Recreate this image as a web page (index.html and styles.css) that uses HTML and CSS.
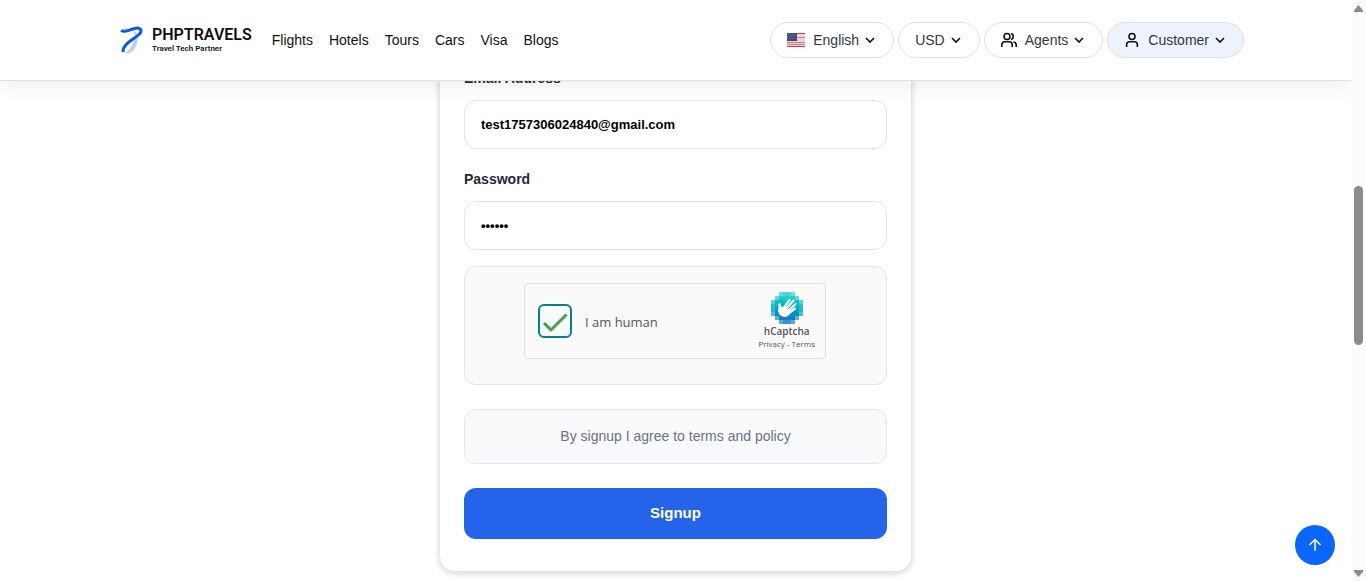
FILE: index.html
```html
<!DOCTYPE html>
<html lang="en">
<head>
<meta charset="utf-8">
<meta name="viewport" content="width=device-width, initial-scale=1">
<title>Signup - PHPTRAVELS</title>
<link rel="stylesheet" href="styles.css">
</head>
<body>
<div class="page">
  <header class="header">
    <a class="brand" href="#">
      <svg class="brand-mark" viewBox="0 0 24 28" aria-hidden="true">
        <path d="M1 6C2 2 7 1 11 4c5 3 5 8 2 13-2 5-5 9-9 10 5 1 9-1 11-5 3-5 3-11 2-15-4-3-8-4-12-2C3 4 1 4 1 6z" fill="#b4d2fb"/>
        <path d="M1 4.500C7 8 12 1.500 17.500 2c4.500.5 4.500 3.500 1.500 6.500C14 13 2.500 18 3 26" fill="none" stroke="#0b57e6" stroke-width="3"/>
      </svg>
      <span class="brand-text">
        <span class="brand-name">PHPTRAVELS</span>
        <span class="brand-tag">Travel Tech Partner</span>
      </span>
    </a>
    <nav class="nav">
      <a href="#">Flights</a>
      <a href="#">Hotels</a>
      <a href="#">Tours</a>
      <a href="#">Cars</a>
      <a href="#">Visa</a>
      <a href="#">Blogs</a>
    </nav>
    <div class="menus">
      <button class="menu" type="button" aria-haspopup="true">
        <svg class="flag" viewBox="0 0 18 14" aria-hidden="true">
          <path fill="#f3d3d5" d="M0 0h18v14H0z"/>
          <path stroke="#c8384a" d="M0 .5h18M0 13.500h18"/>
          <path stroke="#dc7a85" d="M0 4.500h18M0 9.500h18M0 11.500h18"/>
          <path fill="#3b4d7f" d="M0 0h10v8H0z"/>
          <path stroke="#63739c" stroke-dasharray="1 1" d="M1 1.500h8M0 3.500h9M1 5.500h8"/>
        </svg>
        <span class="menu-label">English<svg class="chevron" viewBox="0 0 14 14" aria-hidden="true"><path d="M3 5l4 4 4-4"/></svg></span>
      </button>
      <button class="menu" type="button" aria-haspopup="true">
        <span class="menu-label">USD<svg class="chevron" viewBox="0 0 14 14" aria-hidden="true"><path d="M3 5l4 4 4-4"/></svg></span>
      </button>
      <button class="menu" type="button" aria-haspopup="true">
        <svg class="person" viewBox="0 0 16 16" aria-hidden="true"><circle cx="6" cy="4.500" r="3"/><path d="M.8 15v-2.200a3 3 0 0 1 3-3h4.400a3 3 0 0 1 3 3V15M10 1.600a3 3 0 0 1 0 5.800M12.400 10a3 3 0 0 1 2.800 2.800V15"/></svg>
        <span class="menu-label">Agents<svg class="chevron" viewBox="0 0 14 14" aria-hidden="true"><path d="M3 5l4 4 4-4"/></svg></span>
      </button>
      <button class="menu menu-active" type="button" aria-haspopup="true">
        <svg class="person" viewBox="0 0 16 16" aria-hidden="true"><circle cx="8" cy="4.500" r="3"/><path d="M2.600 15v-2.200a3 3 0 0 1 3-3h4.800a3 3 0 0 1 3 3V15"/></svg>
        <span class="menu-label">Customer<svg class="chevron" viewBox="0 0 14 14" aria-hidden="true"><path d="M3 5l4 4 4-4"/></svg></span>
      </button>
    </div>
  </header>

  <main class="main">
    <form class="card">
      <div class="field">
        <label class="label" for="email">Email Address</label>
        <input class="input" id="email" type="email" value="test1757306024840@gmail.com">
      </div>
      <div class="field">
        <label class="label" for="password">Password</label>
        <input class="input" id="password" type="password" value="secret">
      </div>
      <div class="panel captcha-panel">
        <div class="captcha">
          <span class="tick">
            <input class="tick-box" id="human" type="checkbox" checked>
            <svg class="tick-mark" viewBox="0 0 34 34" aria-hidden="true"><path d="M6 19l7 7 15.500-15.500"/></svg>
          </span>
          <label class="captcha-label" for="human">I am human</label>
          <div class="captcha-brand">
            <svg class="captcha-logo" viewBox="0 0 32 32" aria-hidden="true" shape-rendering="crispEdges">
              <defs>
                <linearGradient id="sea" x1="0" y1="0" x2="0" y2="1">
                  <stop offset="0" stop-color="#22d8c8"/>
                  <stop offset=".3" stop-color="#00bfc0"/>
                  <stop offset=".65" stop-color="#0099c8"/>
                  <stop offset="1" stop-color="#1478c4"/>
                </linearGradient>
                <clipPath id="edge"><path d="M8 0h16v4h4v4h4v16h-4v4h-4v4H8v-4H4v-4H0V8h4V4h4z"/></clipPath>
                <clipPath id="core"><path d="M12 0h8v4h4v4h4v4h4v8h-4v4h-4v4h-4v4h-8v-4H8v-4H4v-4H0v-8h4V8h4V4h4z"/></clipPath>
              </defs>
              <g clip-path="url(#edge)"><path fill="url(#sea)" opacity=".65" d="M0 0h32v32H0z"/></g>
              <g clip-path="url(#core)"><path fill="url(#sea)" opacity=".5" d="M0 0h32v32H0z"/></g>
              <path fill="url(#sea)" d="M8 4h16v4h4v16h-4v4H8v-4H4V8h4z"/>
              <g shape-rendering="geometricPrecision" stroke="#fff" stroke-linecap="round" fill="none">
                <path stroke-width="2.200" d="M12 17l6.500-9M15 17l7.500-8.500M17 19l7.500-7M18 21l6-4.500M10.500 19L8.500 12"/>
                <path fill="#fff" stroke="none" d="M7.500 12c1 .5 2 3 3 3.500l3-1.500 6.500 5c-1 4-4 6-7 6-5-1-6.500-5-5.500-9z"/>
              </g>
            </svg>
            <span class="captcha-name">hCaptcha</span>
            <span class="captcha-links"><a href="#">Privacy</a> - <a href="#">Terms</a></span>
          </div>
        </div>
      </div>
      <p class="panel terms">By signup I agree to terms and policy</p>
      <button class="submit" type="button">Signup</button>
    </form>
  </main>

  <button class="to-top" type="button" aria-label="Back to top">
    <svg viewBox="0 0 16 16" aria-hidden="true"><path d="M8 14V3M2.500 8L8 2.500 13.500 8"/></svg>
  </button>
</div>
<div class="scrollbar" aria-hidden="true">
  <svg class="scroll-arrow" viewBox="0 0 9 7"><path d="M4.500 0L9 5.500V7H0V5.500z"/></svg>
  <div class="scroll-track"><div class="scroll-thumb"></div></div>
  <svg class="scroll-arrow" viewBox="0 0 9 7"><path d="M4.500 7L9 1.500V0H0v1.500z"/></svg>
</div>
</body>
</html>
```
FILE: styles.css
```css
* {
  box-sizing: border-box;
}

body {
  display: grid;
  grid-template-columns: 1fr 15px;
  height: 100vh;
  margin: 0;
  overflow: hidden;
  background: #fff;
  font-family: "Liberation Sans", Arial, sans-serif;
  font-size: 14px;
  line-height: 20px;
}

a {
  color: inherit;
  text-decoration: none;
}

button,
input {
  font-family: inherit;
}

.page {
  position: relative;
  overflow: hidden;
}

/* Header */
.header {
  position: absolute;
  z-index: 2;
  top: 0;
  left: 0;
  right: 0;
  display: flex;
  align-items: center;
  padding: 22px 107px 22px 120px;
  background: #fff;
  border-bottom: 1px solid #e2e2e3;
  box-shadow: 0 4px 20px rgba(0, 0, 0, 0.08);
}

.brand {
  display: flex;
  align-items: center;
  gap: 8px;
  margin-right: 20px;
}

.brand-mark {
  width: 24px;
  height: 28px;
}

.brand-text {
  display: flex;
  flex-direction: column;
  color: #111;
  font-family: Roboto, sans-serif;
  font-weight: 600;
}

.brand-name {
  font-size: 16px;
  line-height: 18px;
}

.brand-tag {
  font-size: 8px;
  line-height: 10px;
}

.nav {
  display: flex;
  gap: 16px;
  color: #111;
}

.menus {
  display: flex;
  gap: 4px;
  margin-left: auto;
}

.menu {
  display: flex;
  align-items: center;
  gap: 8px;
  height: 36px;
  padding: 0 16px;
  border: 1px solid #dee2e6;
  border-radius: 18px;
  background: #fff;
  color: #32373c;
  font-size: 14px;
}

.menu-active {
  background: #ecf3fc;
}

.menu-label {
  display: flex;
  align-items: center;
  gap: 4px;
}

.flag {
  width: 18px;
  height: 14px;
}

.person,
.chevron {
  width: 16px;
  height: 16px;
  fill: none;
  stroke: #111;
  stroke-width: 1.6;
}

.chevron {
  width: 14px;
  height: 14px;
}

/* Signup form */
.main {
  display: flex;
  justify-content: center;
}

.card {
  display: flex;
  flex-direction: column;
  width: 100%;
  max-width: 473px;
  padding: 68px 24px 32px;
  border: 1px solid #e2e5ec;
  border-top: 0;
  border-radius: 0 0 16px 16px;
  box-shadow: 0 2px 6px rgba(0, 0, 0, 0.16);
}

.field {
  display: flex;
  flex-direction: column;
  gap: 12px;
  margin-bottom: 20px;
}

.field + .panel {
  margin-top: -4px;
}

.label {
  color: #1f2937;
  font-weight: 700;
}

.input {
  width: 100%;
  height: 49px;
  padding: 0 16px;
  border: 1px solid #e2e5ee;
  border-radius: 12px;
  background: #fff;
  color: #000;
  font-size: 13px;
  font-weight: 700;
}

.panel {
  margin: 0 0 24px;
  padding: 16px;
  border: 1px solid #e4e6ea;
  border-radius: 12px;
  background: #f9fafb;
}

.captcha-panel {
  display: flex;
  justify-content: center;
  padding: 16px 17px 25px 16px;
}

.captcha {
  display: flex;
  align-items: center;
  width: 302px;
  height: 76px;
  padding: 0 10px 0 13px;
  border: 1px solid #e0e0e0;
  border-radius: 4px;
  background: #fafafa;
  color: #555;
  font-family: "Open Sans", "Noto Sans", sans-serif;
}

.tick {
  display: grid;
}

.tick-box,
.tick-mark {
  grid-area: 1 / 1;
  width: 34px;
  height: 34px;
  margin: 0;
}

.tick-box {
  appearance: none;
  border: 2px solid #00838f;
  border-radius: 6px;
  background: #fafafa;
}

.tick-mark {
  z-index: 1;
  fill: none;
  stroke: #43a047;
  stroke-width: 3;
  pointer-events: none;
}

.captcha-label {
  margin-left: 13px;
  padding-top: 2px;
  font-size: 13px;
}

.captcha-brand {
  display: flex;
  flex-direction: column;
  align-items: center;
  margin-left: auto;
  padding-bottom: 1px;
}

.captcha-logo {
  width: 32px;
  height: 32px;
}

.captcha-name {
  font-size: 10px;
  font-weight: 600;
  line-height: 15px;
}

.captcha-links {
  font-size: 8px;
  line-height: 10px;
}

.terms {
  padding: 16px 16px 17px;
  color: #6b7280;
  text-align: center;
}

.submit {
  height: 51px;
  padding: 0 0 2px;
  border: 0;
  border-radius: 12px;
  background: #2563eb;
  color: #fff;
  font-size: 15px;
  font-weight: 700;
}

.to-top {
  position: absolute;
  right: 16px;
  bottom: 16px;
  display: grid;
  place-items: center;
  width: 40px;
  height: 40px;
  padding: 0;
  border: 0;
  border-radius: 50%;
  background: #0b66fd;
}

.to-top svg {
  width: 16px;
  height: 16px;
  fill: none;
  stroke: #fff;
  stroke-width: 1.5;
}

/* Page scrollbar */
.scrollbar {
  display: flex;
  flex-direction: column;
  align-items: center;
  gap: 5px;
  padding: 5px 0 4px;
  background: #fcfcfc;
}

.scroll-arrow {
  width: 9px;
  height: 7px;
  fill: #8b8b8b;
}

.scroll-track {
  flex: 1;
  width: 9px;
  padding-top: 169px;
}

.scroll-thumb {
  height: 159px;
  border-radius: 5px;
  background: #8b8b8b;
}
```
